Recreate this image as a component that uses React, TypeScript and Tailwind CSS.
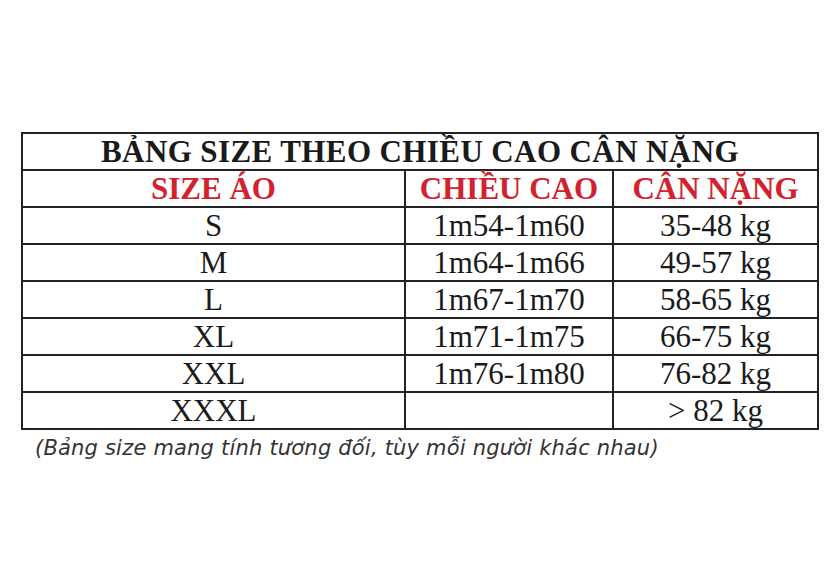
const rows = [
  { size: "S", height: "1m54-1m60", weight: "35-48 kg" },
  { size: "M", height: "1m64-1m66", weight: "49-57 kg" },
  { size: "L", height: "1m67-1m70", weight: "58-65 kg" },
  { size: "XL", height: "1m71-1m75", weight: "66-75 kg" },
  { size: "XXL", height: "1m76-1m80", weight: "76-82 kg" },
  { size: "XXXL", height: "", weight: "> 82 kg" },
];

const serif = { fontFamily: '"Liberation Serif", "Times New Roman", serif' };

export default function App() {
  return (
    <div className="w-[828px] h-[575px] bg-white pt-[132px] pl-[21px]">
      <table className="border-collapse text-[#1a1a1a]" style={serif}>
        <colgroup>
          <col className="w-[383px]" />
          <col className="w-[208px]" />
          <col className="w-[205px]" />
        </colgroup>
        <tbody>
          <tr className="h-[37px]">
            <td colSpan={3} className="border-2 border-[#222] text-center text-[31px] tracking-[0.4px] font-bold leading-none p-0">
              BẢNG SIZE THEO CHIỀU CAO CÂN NẶNG
            </td>
          </tr>
          <tr className="h-[37px]">
            <td className="border-2 border-[#222] text-center text-[31px] font-bold leading-none p-0 text-[#d3212d]">SIZE ÁO</td>
            <td className="border-2 border-[#222] text-center text-[31px] font-bold leading-none p-0 text-[#d3212d]">CHIỀU CAO</td>
            <td className="border-2 border-[#222] text-center text-[31px] font-bold leading-none p-0 text-[#d3212d]">CÂN NẶNG</td>
          </tr>
          {rows.map((r) => (
            <tr key={r.size} className="h-[37px]">
              <td className="border-2 border-[#222] text-center text-[31px] leading-none p-0">{r.size}</td>
              <td className="border-2 border-[#222] text-center text-[31px] leading-none p-0">{r.height}</td>
              <td className="border-2 border-[#222] text-center text-[31px] leading-none p-0">{r.weight}</td>
            </tr>
          ))}
        </tbody>
      </table>
      <p
        className="mt-[4px] ml-[14px] text-[21px] tracking-[0.2px] leading-[28px] italic text-[#333]"
        style={{ fontFamily: '"DejaVu Sans", Verdana, sans-serif' }}
      >
        (Bảng size mang tính tương đối, tùy mỗi người khác nhau)
      </p>
    </div>
  );
}
